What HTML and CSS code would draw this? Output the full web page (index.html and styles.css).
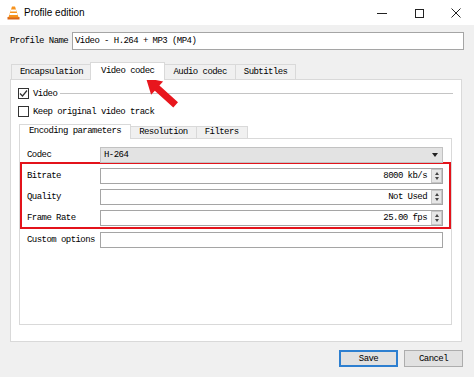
FILE: index.html
```html
<!DOCTYPE html>
<html>
<head>
    <title>Profile edition</title>
    <link rel="stylesheet" href="styles.css">
</head>
<body>
    <div class="titlebar">
        <svg class="app-icon" width="13" height="14" viewBox="0 0 13 14">
            <path d="M0.5 11 h12 v2.5 h-12z" fill="#d9661a"/>
            <path d="M5 0.5 h3 l3.6 11 h-10.2z" fill="#f7931e"/>
            <path d="M4.1 3.4 h4.8 l0.7 2.1 h-6.2z" fill="#fff"/>
            <path d="M3 7 h7 l0.7 2.1 h-8.4z" fill="#fff"/>
        </svg>
        <span class="title">Profile edition</span>
        <div class="window-controls">
            <span><svg width="10" height="10" viewBox="0 0 10 10"><path d="M0 5.5 h10" stroke="#222" stroke-width="1"/></svg></span>
            <span><svg width="10" height="10" viewBox="0 0 10 10"><rect x="1.5" y="1.5" width="8" height="8" fill="none" stroke="#222" stroke-width="1"/></svg></span>
            <span><svg width="10" height="10" viewBox="0 0 10 10"><path d="M0.5 0.5 L9.5 9.5 M9.5 0.5 L0.5 9.5" stroke="#222" stroke-width="1"/></svg></span>
        </div>
    </div>

    <div class="dialog">
        <div class="profile-row">
            <label>Profile Name</label>
            <div class="field">Video - H.264 + MP3 (MP4)</div>
        </div>

        <div class="tabs">
            <div class="tab-bar">
                <div class="tab">Encapsulation</div>
                <div class="tab active">Video codec</div>
                <div class="tab">Audio codec</div>
                <div class="tab">Subtitles</div>
            </div>
            <div class="tab-panel">
                <div class="group-head">
                    <span class="check"><svg width="9" height="9" viewBox="0 0 9 9"><path d="M1 4.5 L3.5 7 L8 1.5" fill="none" stroke="#333" stroke-width="1.2"/></svg></span>
                    <span>Video</span>
                    <span class="group-line"></span>
                </div>
                <div class="check-row">
                    <span class="check"></span>
                    <span>Keep original video track</span>
                </div>

                <div class="subtabs">
                    <div class="tab-bar small">
                        <div class="tab active">Encoding parameters</div>
                        <div class="tab">Resolution</div>
                        <div class="tab">Filters</div>
                    </div>
                    <div class="sub-panel">
                        <div class="form-row">
                            <label>Codec</label>
                            <div class="combo">H-264<span class="drop"></span></div>
                        </div>
                        <div class="highlight">
                            <div class="form-row">
                                <label>Bitrate</label>
                                <div class="box"><span class="value">8000 kb/s</span><span class="spin"><i class="up"></i><i class="down"></i></span></div>
                            </div>
                            <div class="form-row">
                                <label>Quality</label>
                                <div class="box"><span class="value">Not Used</span><span class="spin"><i class="up"></i><i class="down"></i></span></div>
                            </div>
                            <div class="form-row">
                                <label>Frame Rate</label>
                                <div class="box"><span class="value">25.00 fps</span><span class="spin"><i class="up"></i><i class="down"></i></span></div>
                            </div>
                        </div>
                        <div class="form-row custom">
                            <label>Custom options</label>
                            <div class="box"></div>
                        </div>
                    </div>
                </div>
            </div>
        </div>

        <div class="buttons">
            <button class="btn default">Save</button>
            <button class="btn">Cancel</button>
        </div>
    </div>

    <!-- annotation arrow pointing at the Video codec tab -->
    <svg class="arrow" width="474" height="377" viewBox="0 0 474 377">
        <polygon points="146,78 163.1,81.4 159.4,85.5 178,102.2 173.3,107.4 154.8,90.7 151.1,94.8" fill="#e8161d"/>
    </svg>
</body>
</html>
```

FILE: styles.css
```css
* {
    box-sizing: border-box;
}
body {
    margin: 0;
    width: 474px;
    height: 377px;
    background-color: #f0f0f0;
    font-family: "Liberation Mono", monospace;
    font-size: 9px;
    letter-spacing: -0.55px;
    color: #000;
    position: relative;
    overflow: hidden;
}
.titlebar {
    height: 25px;
    background-color: #fff;
    display: flex;
    align-items: center;
    padding-left: 7px;
}
.title {
    font-family: "Liberation Sans", Arial, sans-serif;
    font-size: 10px;
    letter-spacing: 0;
    margin-left: 4px;
}
.window-controls {
    margin-left: auto;
    display: flex;
}
.window-controls span {
    width: 37px;
    height: 25px;
    display: flex;
    align-items: center;
    justify-content: center;
}
.dialog {
    padding: 7px 10px 0 10px;
}
.profile-row {
    display: flex;
    align-items: center;
    height: 18px;
}
.profile-row label {
    width: 62px;
}
.field {
    flex: 1;
    height: 18px;
    border: 1px solid #a5a5a5;
    background-color: #fff;
    padding-left: 2px;
    line-height: 16px;
}

/* tabs */
.tabs {
    margin-top: 12px;
    margin-right: 2px;
}
.tab-bar {
    display: flex;
    align-items: flex-end;
    height: 17px;
    padding-left: 1px;
}
.tab {
    height: 15px;
    line-height: 14px;
    padding: 0 8px;
    border: 1px solid #d9d9d9;
    border-bottom: none;
    background-color: #f0f0f0;
    margin-right: -1px;
}
.tab.active {
    height: 18px;
    line-height: 16px;
    padding: 0 10px;
    margin-left: -1px;
    margin-bottom: -1px;
    background-color: #fff;
    position: relative;
    z-index: 1;
}
.tab-panel {
    height: 263px;
    border: 1px solid #d9d9d9;
    background-color: #fff;
    padding: 8px 9px 0 8px;
}
.group-head,
.check-row {
    display: flex;
    align-items: center;
    height: 11px;
    margin-left: -1px;
}
.check-row {
    margin-top: 7px;
}
.check {
    width: 11px;
    height: 11px;
    border: 1px solid #333;
    background-color: #fff;
    margin-right: 4px;
    display: flex;
    align-items: center;
    justify-content: center;
}
.group-line {
    flex: 1;
    height: 1px;
    background-color: #c4c4c4;
    margin-left: 3px;
    margin-right: -1px;
}

/* inner tabs */
.subtabs {
    margin-top: 7px;
}
.tab-bar.small {
    height: 14px;
    padding-left: 0;
}
.tab-bar.small .tab {
    height: 12px;
    line-height: 11px;
    padding: 0 8px;
}
.tab-bar.small .tab.active {
    height: 15px;
    line-height: 13px;
    padding: 0 9px;
    margin-left: 0;
}
.sub-panel {
    height: 187px;
    border: 1px solid #d9d9d9;
    background-color: #fff;
    padding: 8px 8px 0 7px;
}
.form-row {
    display: flex;
    align-items: center;
    height: 16px;
}
.form-row + .form-row {
    margin-top: 5px;
}
.form-row label {
    width: 73px;
}
.combo {
    flex: 1;
    height: 16px;
    background-color: #e3e3e3;
    border: 1px solid #c2c2c2;
    padding-left: 3px;
    display: flex;
    align-items: center;
}
.drop {
    margin-left: auto;
    margin-right: 4px;
    width: 0;
    height: 0;
    border-left: 3px solid transparent;
    border-right: 3px solid transparent;
    border-top: 4px solid #222;
}
.highlight {
    margin: -1px -8px 0 -7px;
    padding: 4px 6px 1px 5px;
    border: 2px solid #e3131b;
}
.form-row.custom {
    margin-top: 3px;
}
.box {
    flex: 1;
    height: 16px;
    border: 1px solid #a5a5a5;
    background-color: #fff;
    display: flex;
    align-items: center;
    justify-content: flex-end;
}
.value {
    margin-right: 4px;
}
.spin {
    width: 11px;
    height: 14px;
    background-color: #e6e6e6;
    border: 1px solid #c6c6c6;
    display: flex;
    flex-direction: column;
    align-items: center;
    justify-content: center;
    gap: 2px;
}
.spin i {
    width: 0;
    height: 0;
    border-left: 2px solid transparent;
    border-right: 2px solid transparent;
}
.spin .up {
    border-bottom: 3px solid #444;
}
.spin .down {
    border-top: 3px solid #444;
}

/* bottom buttons */
.buttons {
    display: flex;
    justify-content: flex-end;
    gap: 6px;
    margin-top: 8px;
    margin-right: 1px;
}
.btn {
    width: 59px;
    height: 17px;
    padding: 0;
    font-family: "Liberation Mono", monospace;
    font-size: 9px;
    letter-spacing: -0.55px;
    color: #000;
    background-color: #e1e1e1;
    border: 1px solid #adadad;
}
.btn.default {
    border: 2px solid #2d7fd0;
}
.arrow {
    position: absolute;
    left: 0;
    top: 0;
    pointer-events: none;
}
```
